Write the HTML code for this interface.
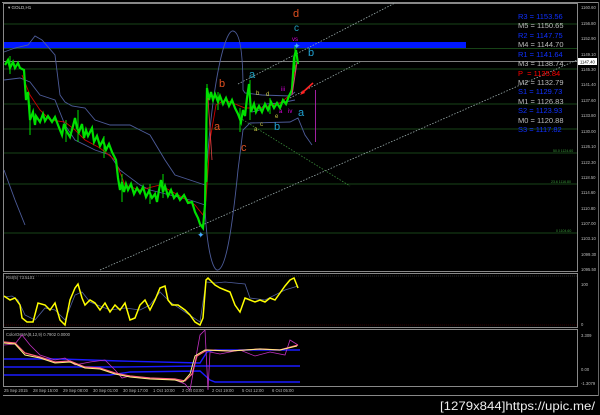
<!DOCTYPE html>
<html><head><meta charset="utf-8"><style>
html,body{margin:0;padding:0;background:#000;width:600px;height:415px;overflow:hidden}
svg{display:block}
text{font-family:"Liberation Sans",sans-serif}
</style></head><body>
<svg width="600" height="415" viewBox="0 0 600 415" xmlns="http://www.w3.org/2000/svg">
<rect width="600" height="415" fill="#000"/>
<rect x="3.5" y="3.5" width="574" height="268" fill="none" stroke="#888" stroke-width="1"/>
<rect x="3.5" y="273.5" width="574" height="54" fill="none" stroke="#888" stroke-width="1"/>
<rect x="3.5" y="329.5" width="574" height="57" fill="none" stroke="#888" stroke-width="1"/>
<line x1="3" y1="395.5" x2="598" y2="395.5" stroke="#888"/>
<line x1="598.5" y1="2" x2="598.5" y2="396" stroke="#666"/>
<line x1="2" y1="2.5" x2="598" y2="2.5" stroke="#888"/>
<text x="8" y="9" font-size="4.5" fill="#ccc">▾ GOLD,H1</text>
<g stroke="#1f5a1f" stroke-width="0.8">
<line x1="4" y1="24" x2="577" y2="24"/><line x1="4" y1="48.5" x2="577" y2="48.5"/>
<line x1="4" y1="69" x2="577" y2="69"/><line x1="4" y1="104" x2="577" y2="104"/>
<line x1="4" y1="129" x2="577" y2="129"/><line x1="4" y1="153" x2="577" y2="153"/>
<line x1="4" y1="184" x2="577" y2="184"/><line x1="4" y1="233" x2="577" y2="233"/>
</g>
<line x1="4" y1="61.5" x2="577" y2="61.5" stroke="#aaa" stroke-width="0.8"/>
<rect x="4" y="42" width="462" height="6" fill="#0018ff"/>
<g stroke="#9aa" stroke-width="0.8" stroke-dasharray="1.5,1.5" fill="none">
<line x1="100" y1="270" x2="577" y2="60"/>
<line x1="238" y1="84" x2="395" y2="3"/>
<line x1="290" y1="98" x2="360" y2="62"/>
</g>
<line x1="240" y1="118" x2="350" y2="186" stroke="#3a8a3a" stroke-width="0.8" stroke-dasharray="1.5,1.5"/>
<g stroke="#4d5c9a" stroke-width="0.9" fill="none">
<path d="M4,52 L15,48 L28,45 L35,36 L42,40 L55,55 L60,95 L65,102 L72,106 L85,108 L95,120 L110,125 L130,125 L140,130 L150,135 L165,160 L175,175 L190,180 L205,185"/>
<path d="M4,80 L20,78 L30,82 L40,95 L55,100 L65,125 L75,140 L95,150 L110,155 L120,170 L140,185 L150,190 L170,195 L190,200 L205,205"/>
<path d="M4,170 L15,200 L25,225"/>
<path d="M206,180 C212,80 225,30 233,31 C241,32 243,60 243,90 L245,93 L262,95 L290,96 L295,92"/>
<path d="M205,195 C205,240 212,272 218,270 C226,268 232,230 238,170 L243,130 L250,123 L290,122 L298,118 L305,135 L312,145"/>
<path d="M252,112 L260,110 L265,104 L280,103 L295,100"/>
</g>
<polyline fill="none" stroke="#c00" stroke-width="0.9" points="22,75 30,95 40,110 50,120 65,122 75,130 85,140 100,148 115,160 125,185 140,190 160,185 180,196 195,205 203,215 206,200 210,140 216,105 225,100 245,108 260,108 280,103 290,95 296,65"/>
<polyline fill="none" stroke="#00e000" stroke-width="2.2" points="5,65 8,60 10,68 13,62 15,68 18,63 20,68 24,70 26,100 28,92 30,120 33,112 35,125 36,116 40,122 43,114 45,121 48,116 52,122 55,117 58,125 62,135 64,124 66,130 70,137 73,126 75,118 77,128 79,132 82,124 84,138 86,130 88,136 92,128 94,142 97,136 100,146 103,140 106,150 109,144 112,152 116,160 118,178 120,190 122,182 124,192 126,184 128,190 131,184 134,194 137,188 140,193 143,187 146,197 149,191 152,198 155,194 157,202 159,190 161,180 163,192 165,186 168,196 171,190 174,198 177,194 180,200 184,195 188,203 192,202 195,212 198,218 200,224 203,228 205,205 207,88 209,100 211,92 213,100 215,94 218,102 220,96 223,104 226,98 229,106 232,100 235,108 238,114 241,122 243,110 245,116 247,98 249,84 251,112 254,104 256,112 259,106 262,112 265,104 268,110 271,102 274,108 277,103 280,108 283,100 286,104 289,96 292,90 294,58 296,50 298,64"/>
<g stroke="#00e000" stroke-width="1">
<line x1="10" y1="56" x2="10" y2="74"/><line x1="30" y1="105" x2="30" y2="135"/><line x1="66" y1="120" x2="66" y2="142"/><line x1="78" y1="110" x2="78" y2="142"/><line x1="104" y1="136" x2="104" y2="158"/><line x1="122" y1="174" x2="122" y2="202"/><line x1="150" y1="184" x2="150" y2="204"/><line x1="163" y1="174" x2="163" y2="198"/><line x1="207" y1="84" x2="207" y2="182"/><line x1="218" y1="92" x2="218" y2="110"/><line x1="240" y1="108" x2="240" y2="132"/><line x1="250" y1="80" x2="250" y2="120"/><line x1="270" y1="98" x2="270" y2="114"/><line x1="295" y1="46" x2="295" y2="72"/>
</g>
<line x1="208" y1="98" x2="212" y2="160" stroke="#d44" stroke-width="0.8"/>
<line x1="297" y1="62" x2="292" y2="95" stroke="#d04070" stroke-width="1"/>
<line x1="315.5" y1="90" x2="315.5" y2="142" stroke="#a020a0" stroke-width="1"/>
<line x1="302" y1="93" x2="313" y2="83" stroke="#f22" stroke-width="1.6"/>
<polygon points="300,95 305,93 303,90" fill="#f22"/>
<g font-family="Liberation Serif,serif" font-size="11">
<text x="293" y="17" fill="#e05020">d</text>
<text x="294" y="31" fill="#20a0c0" font-size="10">c</text>
<text x="308" y="56" fill="#20a0d0">b</text>
<text x="219" y="87" fill="#e05020">b</text>
<text x="249" y="78" fill="#20a0c0">a</text>
<text x="214" y="130" fill="#e05020">a</text>
<text x="241" y="151" fill="#e05020">c</text>
<text x="274" y="130" fill="#20a0d0">b</text>
<text x="298" y="116" fill="#20a0d0">a</text>
</g>
<g font-family="Liberation Serif,serif" font-size="6">
<text x="256" y="95" fill="#cc4">b</text><text x="266" y="96" fill="#cc4">d</text>
<text x="281" y="91" fill="#d0d">iii</text><text x="279" y="113" fill="#d0d">a</text>
<text x="288" y="113" fill="#d0d">iv</text><text x="275" y="118" fill="#cc4">e</text>
<text x="260" y="126" fill="#cc4">c</text><text x="254" y="131" fill="#cc4">a</text>
<text x="292" y="41" fill="#d0d">vs</text>
</g>
<text x="293" y="49" font-size="9" fill="#4af">✦</text>
<text x="197" y="238" font-size="9" fill="#4af">✦</text>
<g font-size="7.5">
<text x="518" y="19" fill="#1030ff">R3 = 1153.56</text>
<text x="518" y="28" fill="#bbb">M5 = 1150.65</text>
<text x="518" y="38" fill="#1030ff">R2 = 1147.75</text>
<text x="518" y="47" fill="#bbb">M4 = 1144.70</text>
<text x="518" y="57" fill="#1030ff">R1 = 1141.64</text>
<text x="518" y="66" fill="#bbb">M3 = 1138.74</text>
<text x="518" y="76" fill="#f00">P&#160;&#160;= 1135.84</text>
<text x="518" y="85" fill="#bbb">M2 = 1132.79</text>
<text x="518" y="94" fill="#1030ff">S1 = 1129.73</text>
<text x="518" y="104" fill="#bbb">M1 = 1126.83</text>
<text x="518" y="113" fill="#1030ff">S2 = 1123.93</text>
<text x="518" y="123" fill="#bbb">M0 = 1120.88</text>
<text x="518" y="132" fill="#1030ff">S3 = 1117.82</text>
</g>
<g font-size="3.5" fill="#3a9a3a">
<text x="553" y="152">50.0 1124.60</text><text x="551" y="183">23.6 1116.80</text><text x="556" y="232">0 1104.60</text>
</g>
<g font-size="4.2" fill="#bbb">
<text x="581" y="9">1160.60</text><text x="581" y="25">1156.80</text><text x="581" y="40">1152.90</text><text x="581" y="56">1149.10</text><text x="581" y="71">1145.30</text><text x="581" y="86">1141.40</text><text x="581" y="102">1137.60</text><text x="581" y="117">1133.80</text><text x="581" y="133">1130.00</text><text x="581" y="148">1126.10</text><text x="581" y="164">1122.30</text><text x="581" y="179">1118.50</text><text x="581" y="194">1114.60</text><text x="581" y="210">1110.80</text><text x="581" y="225">1107.00</text><text x="581" y="240">1103.10</text><text x="581" y="256">1099.30</text><text x="581" y="271">1095.50</text>
<text x="581" y="286">100</text><text x="581" y="326">0</text><text x="581" y="337">3.309</text><text x="581" y="371">0.00</text><text x="581" y="385">-1.3079</text>
</g>
<rect x="578" y="58" width="19" height="7" fill="#fff"/>
<text x="580" y="63.5" font-size="4.2" fill="#000">1147.40</text>
<text x="6" y="279" font-size="4.2" fill="#bbb">RSI(5) 73.5101</text>
<line x1="4" y1="276" x2="577" y2="276" stroke="#555" stroke-dasharray="1,1" stroke-width="0.6"/>
<line x1="4" y1="325" x2="577" y2="325" stroke="#600" stroke-dasharray="1,1" stroke-width="0.6"/>
<polyline fill="none" stroke="#5060a0" stroke-width="0.8" points="4,297 12,296 18,300 25,315 35,320 45,308 55,310 65,320 75,295 82,292 90,302 100,306 110,310 125,308 140,310 150,305 160,292 170,302 185,312 200,322 206,282 215,283 225,282 245,284 250,298 265,300 285,290 298,286"/>
<polyline fill="none" stroke="#ff0" stroke-width="1.5" points="4,296 10,300 15,298 20,305 22,318 27,322 33,322 38,303 45,305 50,310 55,303 60,320 65,325 70,300 75,288 78,284 82,298 85,305 90,300 95,303 100,310 105,303 110,312 115,305 120,310 125,303 130,320 135,318 140,305 145,300 150,310 155,300 160,288 165,286 168,300 172,305 178,305 185,310 190,315 195,322 200,325 203,318 206,280 208,278 215,285 220,288 225,290 230,292 235,305 240,312 245,298 250,300 255,302 260,300 265,302 270,298 275,300 280,293 285,286 290,280 294,278 298,288"/>
<text x="6" y="336" font-size="4.2" fill="#bbb">ColorOsMA(8,12,9) 0.7902 0.0000</text>
<g fill="none" stroke="#1a1aff" stroke-width="1.4">
<polyline points="4,359 60,359 120,361 200,363 207,352 215,350 300,350"/>
<polyline points="4,367 120,367 200,366 300,366"/>
<polyline points="4,375 110,375 130,372 200,371 210,380 215,382 300,382"/>
</g>
<polyline fill="none" stroke="#c030c0" stroke-width="0.8" points="4,345 15,344 22,335 30,345 40,355 55,360 65,358 75,365 90,362 105,360 115,370 122,378 130,376 150,378 175,380 185,384 190,390 200,335 205,330 208,390 210,352 220,354 240,350 255,356 270,352 285,355 290,340 298,345"/>
<polyline fill="none" stroke="#ff6080" stroke-width="1.2" points="4,342 15,343 25,353 40,357 55,362 70,361 85,367 100,368 115,373 130,376 150,378 175,379 185,381 192,374 197,356 207,350 230,351 260,349 280,350 298,345"/>
<polyline fill="none" stroke="#ffee80" stroke-width="1" points="4,343 15,344 25,355 40,358 55,363 70,362 85,368 100,369 115,374 130,377 150,379 175,380 183,382 190,374 195,356 205,350 230,351 260,349 280,350 297,346"/>
<g font-size="4.2" fill="#bbb">
<text x="4" y="392">25 Sep 2015</text><text x="33" y="392">28 Sep 15:00</text><text x="63" y="392">29 Sep 08:00</text><text x="93" y="392">30 Sep 01:00</text><text x="123" y="392">30 Sep 17:00</text><text x="153" y="392">1 Oct 10:00</text><text x="182" y="392">2 Oct 03:00</text><text x="212" y="392">2 Oct 19:00</text><text x="242" y="392">5 Oct 12:00</text><text x="272" y="392">6 Oct 05:00</text>
</g>
<text x="440" y="410" font-size="12" fill="#eee" font-family="DejaVu Sans Mono,monospace" textLength="155" lengthAdjust="spacingAndGlyphs">[1279x844]https://upic.me/</text>
</svg>
</body></html>
